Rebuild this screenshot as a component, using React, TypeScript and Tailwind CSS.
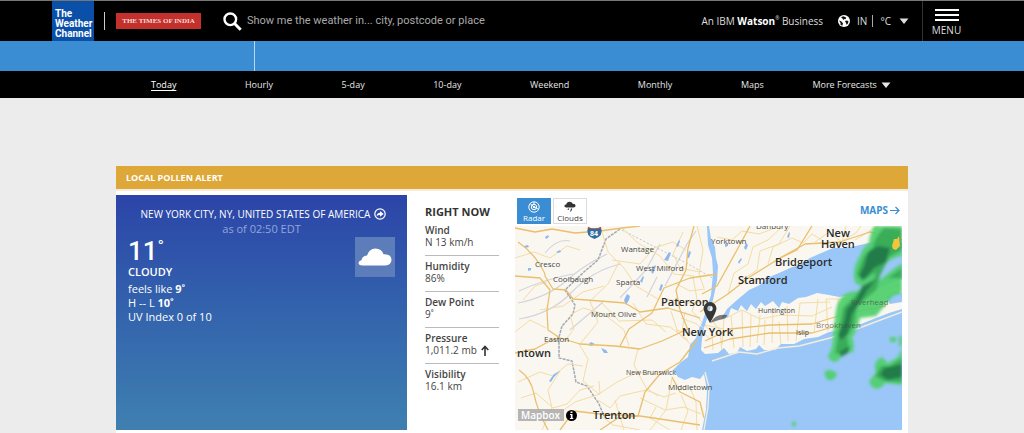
import type { ReactNode } from "react";

const forecastLinks = ["Hourly", "5-day", "10-day", "Weekend", "Monthly", "Maps"];

const conditions: { label: string; value: string; rising?: boolean }[] = [
  { label: "Wind", value: "N 13 km/h" },
  { label: "Humidity", value: "86%" },
  { label: "Dew Point", value: "9˚" },
  { label: "Pressure", value: "1,011.2 mb", rising: true },
  { label: "Visibility", value: "16.1 km" },
];

// [name, x, baseline, size, weight]
const places: [string, number, number, number, number][] = [
  ["Cresco", 535, 267, 8, 400],
  ["Coolbaugh", 553, 282, 8, 400],
  ["Wantage", 621, 252, 8, 400],
  ["West Milford", 636, 271, 8, 400],
  ["Sparta", 616, 285, 8, 400],
  ["Mount Olive", 591, 317, 8, 400],
  ["Easton", 544, 342, 8, 400],
  ["Yorktown", 711, 244, 8, 400],
  ["Danbury", 756, 229, 8, 400],
  ["Huntington", 758, 313, 7, 400],
  ["Islip", 796, 335, 7, 400],
  ["Brookhaven", 816, 328, 8, 400],
  ["Riverhead", 851, 305, 8, 400],
  ["New Brunswick", 626, 375, 7, 400],
  ["Middletown", 668, 390, 8, 400],
  ["New", 826, 237, 11, 600],
  ["Haven", 821, 248, 11, 600],
  ["Bridgeport", 775, 266, 11, 600],
  ["Stamford", 738, 284, 11, 600],
  ["Paterson", 661, 306, 11, 600],
  ["New York", 682, 336, 11, 600],
  ["ntown", 517, 357, 11, 600],
  ["Trenton", 593, 419, 11, 600],
];

const mainRoads = [
  "M515 228 L535 232 L552 229 L575 233 L600 231 L622 228 L640 226",
  "M518 242 Q530 250 538 262 T545 276 L553 289 L566 290 L573 299 L600 301 L625 303 L640 312 L668 308 L700 318",
  "M515 276 L540 278 L550 290 L547 310 L548 330 L560 338 L580 344 L615 346 L640 349 L662 341 L690 328",
  "M515 353 L535 349 L548 342 L560 338",
  "M519 370 Q531 378 534 394 T548 430",
  "M694 226 L688 248 L686 270 L676 290 L680 310 L688 330",
  "M700 312 L728 294 L748 278 L780 258 L805 244 L840 242 L870 232 L902 240",
  "M697 340 L680 362 L660 374 L645 392 L638 416 L618 418 L600 430",
  "M672 377 L680 392 L700 402 L704 418",
  "M705 341 L730 329 L770 325 L812 324 L845 314 L886 306",
  "M704 348 L730 339 L770 333 L812 333 L850 322",
  "M702 294 L717 286 L737 250 L750 226",
  "M780 258 L797 250 L812 226",
  "M620 346 L629 329 L652 313 L664 288 L690 278 L717 274",
  "M560 430 L574 411 L600 414 L640 416 L700 425",
];

const minorRoads = [
  "M515 258 L534 252 L550 258 L567 246 L580 250",
  "M523 300 L535 286 L547 282",
  "M515 332 L530 320 L546 328 M580 344 L598 322 L590 301 L608 284 L619 262",
  "M540 310 L563 306 L583 292 L604 286",
  "M602 232 L608 252 L624 268 L636 286 L658 299",
  "M612 260 L640 264 L654 248 L673 242 L686 250",
  "M622 228 L638 243 L660 256 L674 274 L694 276",
  "M633 303 L646 324 L670 327 L688 340",
  "M601 302 L619 321 L652 320 L666 332",
  "M579 344 L588 359 L583 381 L599 394 L617 382 L638 372 L658 374",
  "M599 381 L600 394 L575 402 L561 412",
  "M521 398 L536 393 L553 408 L567 404 L580 390 L594 386",
  "M518 382 L540 372 L553 376 L568 364 L583 366",
  "M638 349 L634 365 L646 388 L658 396",
  "M598 400 L610 408 L620 396 L646 390 L664 397 L676 393",
  "M600 415 L613 425 L640 430 M615 400 L624 430",
  "M640 398 L665 410 L684 407 L701 414",
  "M650 430 L666 410 L672 378 M681 395 L688 411 L681 430",
  "M656 407 L650 418 L670 430 M690 388 L696 402 L697 430",
  "M717 237 L732 240 L742 231 L759 234 L775 228",
  "M728 294 L734 273 L748 264 L753 247 L768 240 L783 226",
  "M741 281 L757 270 L760 251 L779 244 L790 226",
  "M768 264 L773 247 L792 238 L803 243 L812 234 L822 240",
  "M815 242 L829 232 L842 242 L846 226",
  "M835 245 L856 233 L861 226 M855 240 L878 226 M884 240 L894 226",
  "M722 345 L724 319 L742 310 L760 319 L781 315 L812 316 L832 307",
  "M743 347 L742 310 M757 343 L760 315 M772 343 L773 309 M788 341 L787 306",
  "M796 341 L800 303 L830 302 M814 333 L818 299 M828 331 L826 299 L850 299",
  "M841 325 L838 299 M856 319 L858 294 L882 289 M872 313 L870 296 L900 284",
  "M671 311 L678 333 L695 348 M693 277 L697 299 L692 311 L711 332",
  "M675 283 L690 291 L705 289 M667 299 L686 303 L710 302",
  "M681 318 L697 324 L710 340 M685 312 L682 332 M676 330 L699 335",
  "M706 310 L714 323 L723 335 M700 324 L724 329 M712 334 L713 350 M720 328 L722 353",
  "M731 316 L734 348 M751 315 L750 347 M765 320 L764 345 M779 322 L781 345",
  "M697 226 L703 250 L699 274 L704 288 M683 232 L673 254 L680 268 L700 272",
  "M542 430 L552 408 L548 390 L560 371",
  "M564 342 L574 329 L570 315 L583 308 L604 314 L624 330 L629 346",
];

const lakes = [
  "M624 300 l3 -6 l3 2 l-1 4 l-3 5z",
  "M664 260 l5 -8 l2 1 l-3 8z",
  "M588 345 l3 -3 l4 2 l-3 2z",
  "M601 348 l5 2 l2 3 l-4 0z",
  "M640 281 l3 -5 l1 1 l-2 6z",
  "M651 272 l4 -7 l1 1 l-3 8z",
  "M549 381 l5 -7 l6 -3 l-6 6 l-3 5z",
  "M676 246 l3 -6 l1 1 l-2 6z",
  "M659 290 l2 -6 l2 1 l-2 6z",
  "M687 258 l2 -7 l2 1 l-2 6z",
  "M524 246 l4 -1 l1 2 l-4 1z",
  "M545 237 l3 -2 l1 2 l-3 2z",
  "M556 252 l4 -2 l1 2 l-3 1z",
  "M528 268 l3 0 l0 2 l-3 1z",
  "M744 248 l2 -5 l2 2 l-2 5z",
  "M725 244 l3 -1 l0 3 l-3 1z",
  "M787 237 l2 -5 l1 1 l-1 5z",
  "M738 262 l3 -4 l1 1 l-3 5z",
];

const water = [
  // Long Island Sound
  "M721 319 L727 309 L737 300 L749 290 L760 285 L767 278 L779 273 L790 268 L801 264 L810 258 L819 254 L833 248 L846 248 L860 245 L873 242 L884 244 L902 242 L902 279 L887 284 L873 291 L855 295 L839 297 L829 295 L817 293 L806 297 L798 298 L789 304 L782 302 L779 308 L773 301 L765 306 L761 302 L756 309 L751 304 L747 311 L741 305 L738 311 L731 308 L728 317z",
  // Raritan Bay and the Atlantic
  "M673 370 L680 363 L688 357 L690 345 L696 338 L700 326 L704 328 L702 339 L701 350 L705 354 L718 353 L724 348 L729 354 L737 353 L740 347 L747 351 L756 349 L759 345 L764 350 L775 350 L781 344 L794 344 L804 339 L818 337 L829 332 L842 330 L861 324 L876 318 L889 313 L902 309 L902 430 L702 430 L706 410 L707 390 L704 374 L700 379 L692 377 L685 380 L678 377z",
  // Hudson
  "M709 226 L711 239 L715 247 L716 258 L718 266 L717 281 L713 300 L704 328 L701 326 L711 295 L713 273 L712 258 L708 245 L707 226z",
  "M886 297 L895 291 L902 293 L902 302 L890 304z",
];

const radar = {
  light: [
    "M902 226 L874 226 Q869 236 869 243 Q862 248 860 256 Q853 266 854 278 Q855 286 863 286 Q862 291 850 292 Q838 296 836 310 L833 334 Q834 346 828 356 Q831 364 838 361 Q842 353 853 352 Q855 344 852 338 Q858 328 860 318 L876 316 L893 296 L902 293 L902 263 Q890 271 880 280 Q876 280 880 270 Q890 257 902 256z",
    "M825 371 Q832 368 837 374 Q835 381 828 380 Q824 377 825 371z",
    "M869 382 Q872 376 876 373 Q872 361 882 357 L888 363 L898 357 L902 348 L902 385 L885 383 Q879 392 872 387z",
    "M890 337 h6 v5 h-6z",
    "M899 336 h3 v10 h-3z",
    "M792 422 h4 v4 h-4z",
  ],
  mid: [
    "M902 229 L884 228 Q874 238 873 247 L864 256 L857 274 L862 281 L876 272 L874 280 L858 293 L843 308 L839 330 L835 354 L849 350 L847 336 L854 326 L857 306 L876 290 L880 276 L889 257 L902 250z",
    "M875 376 L881 366 L890 366 L902 358 L902 382 L884 381z",
    "M888 278 L902 268 L902 278z",
  ],
  dark: [
    "M868 252 L878 246 L890 248 L886 262 L874 268 L864 280 L859 276 L864 266z",
    "M847 308 L856 300 L862 286 L876 279 L866 292 L860 303 L852 314 L848 334 L841 340 L838 335 L844 322z",
    "M880 375 L884 368 L902 364 L902 377 L888 380z",
    "M839 352 L850 346 L848 353 L841 357z",
  ],
};

function Caret() {
  return (
    <svg viewBox="0 0 10 6" className="h-[6px] w-2.5" fill="currentColor" aria-hidden="true">
      <path d="M0.5 0.5h9L5 6z" />
    </svg>
  );
}

function SearchIcon() {
  return (
    <svg viewBox="0 0 19 19" className="h-[19px] w-[19px] shrink-0" fill="none" stroke="#fff" aria-hidden="true">
      <circle cx="7.3" cy="7.3" r="5.8" strokeWidth="2.4" />
      <path d="M11.5 11.5L17.7 17.7" strokeWidth="3" />
    </svg>
  );
}

function GlobeIcon() {
  return (
    <svg viewBox="0 0 12 12" className="h-3 w-3" aria-hidden="true">
      <circle cx="6" cy="6" r="6" fill="#fff" />
      <path d="M5.3 1.2L8.2 2.4L7.6 4.3L6.3 4L5.4 5L4.4 3.4L3 2.2z" fill="#111" />
      <path d="M1 5.5L3.2 6.3L5 8.2L4.3 10.8L2.5 9.7L2.6 8z" fill="#111" />
      <path d="M7 6L9 5.5L10.6 6.6L9.6 8.9L8.5 9.8L8 8z" fill="#111" />
    </svg>
  );
}

function LayerButton({ active, label, children }: { active?: boolean; label: string; children: ReactNode }) {
  return (
    <button
      type="button"
      className={
        active
          ? "flex h-[26px] w-[34px] flex-col items-center justify-between border border-[#3a8dd2] bg-[#3a8dd2] pt-0.5 text-[8px] leading-[10px] text-white"
          : "flex h-[26px] w-[34px] flex-col items-center justify-between border border-[#dcdcdc] bg-white pt-0.5 text-[8px] leading-[10px] text-[#444]"
      }
    >
      {children}
      {label}
    </button>
  );
}

function RadarMap() {
  return (
    <svg
      viewBox="515 226 387 204"
      className="block w-full"
      role="img"
      aria-label="Radar map around New York"
      fontFamily="'Open Sans', sans-serif"
    >
      <defs>
        <filter id="soft" x="-10%" y="-10%" width="120%" height="120%">
          <feGaussianBlur stdDeviation="1.6" />
        </filter>
      </defs>
      <rect x="515" y="226" width="387" height="204" fill="#faf7f1" />
      <g fill="none" stroke="#d5d3dc" strokeWidth="1.2">
        <path d="M518 303 Q548 297 566 281 T607 254" />
        <path d="M519 319 Q551 314 572 292 T621 264" />
        <path d="M519 291 Q545 279 573 274 M570 330 L603 302 M620 298 L646 270 L660 244" />
        <path d="M545 253 Q557 238 570 241 M665 286 L687 244 L696 231 M647 297 L657 277" />
      </g>
      <path
        d="M620 229 L606 239 L598 260 L585 271 L565 290 L575 305 L573 314 L562 326 L559 337 L559 358 L572 361 L576 382 L587 386 L599 404 L604 416"
        fill="none"
        stroke="#a3a9b2"
        strokeWidth="1.5"
        strokeDasharray="3 1"
      />
      <path d="M622 230 L690 265 L716 280" fill="none" stroke="#c5c2bc" strokeDasharray="2 2" />
      <g fill="none" stroke="#f4dca4" strokeWidth="1">
        {minorRoads.map((d) => (
          <path key={d} d={d} />
        ))}
      </g>
      <g fill="#8fb8f0">
        {lakes.map((d) => (
          <path key={d} d={d} />
        ))}
      </g>
      <g fill="#9ac7f7">
        {water.map((d) => (
          <path key={d} d={d} />
        ))}
      </g>
      <path
        d="M712 361 L739 352 L757 354 L778 348 L799 346 L830 338 L862 327 L902 312"
        fill="none"
        stroke="#f3eddc"
        strokeWidth="1.4"
      />
      <path d="M705 372 L709 387 L708 407 L704 430" fill="none" stroke="#f3eddc" strokeWidth="1.4" />
      <g fill="none" stroke="#e9bf6e" strokeWidth="1.3" strokeLinejoin="round">
        {mainRoads.map((d) => (
          <path key={d} d={d} />
        ))}
      </g>

      <g filter="url(#soft)">
        <g fill="#4fcf6b" fillOpacity="0.92">
          {radar.light.map((d) => (
            <path key={d} d={d} />
          ))}
        </g>
        <g fill="#34a653" fillOpacity="0.85">
          {radar.mid.map((d) => (
            <path key={d} d={d} />
          ))}
        </g>
        <g fill="#1f7045" fillOpacity="0.8">
          {radar.dark.map((d) => (
            <path key={d} d={d} />
          ))}
        </g>
      </g>
      <path d="M892 246 L894 239 L897 239 L899 236 L900 246 L896 250 L893 249z" fill="#f2c63c" />

      {places.map(([name, x, y, size, weight]) => (
        <text
          key={name}
          x={x}
          y={y}
          fontSize={size}
          fontWeight={weight}
          fill={weight === 600 ? "#2b2b2b" : "#484848"}
          fillOpacity={name === "Riverhead" || name === "Brookhaven" ? 0.7 : 1}
        >
          {name}
        </text>
      ))}

      {/* interstate shield */}
      <path d="M588 227 Q594 230 601 227 Q604 236 594.500 239 Q585 236 588 227z" fill="#2f6f9f" />
      <path d="M588 227 Q594 230 601 227 L601 229 L588 229z" fill="#c0453f" />
      <text x="590" y="236" fontSize="7" fontWeight="700" fill="#fff">84</text>

      {/* pin */}
      <path d="M710 323 Q716 313 727 315 Q727 319 719 320z" fill="#3a3a3a" fillOpacity="0.65" />
      <path
        d="M710 323 Q704 313 703.500 308.500 A6.500 6.500 0 1 1 716.500 308.500 Q716 313 710 323z M710 305.800 A2.700 2.700 0 1 0 710 311.200 A2.700 2.700 0 1 0 710 305.800z"
        fill="#363636"
        fillRule="evenodd"
      />

      <rect x="518" y="409" width="46" height="12" fill="#a9a9a9" fillOpacity="0.85" />
      <text x="521" y="419" fontSize="10" fontWeight="600" fill="#fff">Mapbox</text>
      <circle cx="571.500" cy="415.500" r="5.500" fill="#000" />
      <path d="M570.500 411.500h2v1.500h-2z M570 414h2.500v4h0.800v1h-3.400v-1h0.900v-3h-0.800z" fill="#fff" />
    </svg>
  );
}

function Header() {
  return (
    <header className="flex h-[41px] items-stretch border-t border-[#777] bg-black pl-[52px] text-[#ddd]">
      <a
        href="#"
        className="flex w-[42px] shrink-0 flex-col justify-end bg-[#0a4fa8] pb-0.5 pl-[3px] font-['Roboto',sans-serif] text-[10px] leading-[10px] font-bold text-white"
      >
        <span>The</span>
        <span>Weather</span>
        <span>Channel</span>
      </a>
      <div className="ml-2.5 h-[18px] w-px self-center bg-[#ccc]" />
      <a
        href="#"
        className="ml-[11px] flex h-4 w-[85px] shrink-0 items-center justify-center self-center bg-[#c4302b] font-['Liberation_Serif',serif] text-[7px] font-bold whitespace-nowrap text-[#f6dcd8]"
      >
        THE TIMES OF INDIA
      </a>
      <label className="ml-[22px] flex flex-1 items-center gap-[5px]">
        <SearchIcon />
        <input
          type="text"
          aria-label="Search location"
          placeholder="Show me the weather in... city, postcode or place"
          className="w-full min-w-0 bg-transparent font-['Roboto','Liberation_Sans',sans-serif] text-[11px] text-white outline-none placeholder:text-[#aaa]"
        />
      </label>
      <p className="flex items-center text-[10px] whitespace-pre">
        An IBM <b className="text-white">Watson</b>
        <span className="self-center pb-1 text-[5px]">®</span> Business
      </p>
      <button type="button" className="ml-[15px] flex items-center text-[10px]">
        <GlobeIcon />
        <span className="ml-[7px]">IN</span>
        <span className="ml-[5px] h-3 w-px bg-[#aaa]" />
        <span className="mr-2 ml-[7px]">°C</span>
        <Caret />
      </button>
      <button
        type="button"
        className="ml-[13px] flex w-[102px] flex-col items-start border-l border-[#333] pt-2 pl-2.5 text-[10px] leading-3"
      >
        <span className="flex w-[27px] flex-col items-center gap-[3px]">
          <span className="h-0.5 w-6 bg-white" />
          <span className="h-0.5 w-6 bg-white" />
          <span className="h-0.5 w-6 bg-white" />
          <span>MENU</span>
        </span>
      </button>
    </header>
  );
}

function CurrentConditions() {
  return (
    <section className="w-[291px] shrink-0 bg-linear-to-b from-[#2c44a8] to-[#3f80b0] px-3 pt-3 text-[11px] leading-[14px] text-white">
      <h1 className="flex items-center justify-center gap-1 pl-1 text-[10px] whitespace-nowrap">
        NEW YORK CITY, NY, UNITED STATES OF AMERICA
        <svg viewBox="0 0 12 12" className="h-3 w-3" aria-hidden="true">
          <circle cx="6" cy="6" r="5.2" fill="none" stroke="#fff" strokeWidth="1.2" />
          <path d="M2.6 8.500Q2.800 4.900 6 4.800V3L9.700 6L6 8.800V7.100Q3.800 7 2.600 8.500z" fill="#fff" />
        </svg>
      </h1>
      <p className="mt-px mb-px text-center text-[#93a6dd]">as of 02:50 EDT</p>
      <div className="flex items-start justify-between">
        <div>
          <p className="font-['Roboto',sans-serif] text-[26px] leading-7 font-medium">
            11<span className="align-top text-[20px] leading-6">˚</span>
          </p>
          <p className="font-semibold">CLOUDY</p>
          <p className="mt-[3px]">
            feels like <b>9˚</b>
          </p>
          <p>
            H -- L <b>10˚</b>
          </p>
          <p>UV Index 0 of 10</p>
        </div>
        <div className="flex h-10 w-10 items-center justify-center bg-[#5d7cba]">
          <svg viewBox="0 0 34 18" className="w-[34px]" fill="#fff" aria-label="Cloudy">
            <path d="M4.500 17.500 Q0.500 17.500 0.500 14.800 Q1 12.500 3.500 12.300 Q3.800 7.800 9 7.400 Q11 1 17.300 0.600 Q23.800 0.800 25.500 6.300 Q33.500 5.800 33.500 12 Q33 17.300 27.500 17.500z" />
          </svg>
        </div>
      </div>
    </section>
  );
}

function RightNow() {
  return (
    <section className="ml-[18px] w-[74px] shrink-0 pt-[9px] text-[10px] leading-3 text-[#444]">
      <h2 className="text-[11px] leading-4 font-bold whitespace-nowrap text-[#333]">RIGHT NOW</h2>
      <dl className="divide-y divide-[#bbb]">
        {conditions.map(({ label, value, rising }) => (
          <div key={label} className="h-9 pt-1">
            <dt className="font-semibold">{label}</dt>
            <dd className="flex items-center whitespace-nowrap">
              {value}
              {rising && (
                <svg viewBox="0 0 8 11" className="ml-1 h-[11px] w-2" fill="none" stroke="#333" strokeWidth="1.6" aria-label="rising">
                  <path d="M4 11V1.500M0.700 5L4 1.500L7.300 5" />
                </svg>
              )}
            </dd>
          </div>
        ))}
      </dl>
    </section>
  );
}

export default function App() {
  return (
    <div className="min-h-screen bg-[#ececec] font-['Open_Sans','Noto_Sans',sans-serif]">
      <Header />
      <div className="flex h-[30px] bg-[#3a8dd2] pl-[254px]">
        <div className="w-px bg-[#b9d8f1]" />
      </div>
      <nav className="bg-black text-[9px] text-[#e6e6e6]">
        <ul className="mx-auto flex h-[27px] max-w-[792px] items-center justify-between pr-[17px] pl-[35px]">
          <li>
            <a href="#" className="text-white underline underline-offset-2">
              Today
            </a>
          </li>
          {forecastLinks.map((name) => (
            <li key={name}>
              <a href="#">{name}</a>
            </li>
          ))}
          <li className="-ml-5">
            <button type="button" className="flex items-center gap-1">
              More Forecasts
              <Caret />
            </button>
          </li>
        </ul>
      </nav>

      <main className="mx-auto mt-[68px] max-w-[792px] bg-white">
        <a href="#" className="flex h-[23px] items-center bg-[#dea839] pl-2.5 text-[9px] font-bold text-white">
          LOCAL POLLEN ALERT
        </a>
        <div className="flex border-t-2 border-[#f8eadd] pt-1 pb-[3px]">
          <CurrentConditions />
          <RightNow />
          <section className="mr-[6px] ml-4 flex-1">
            <div className="flex h-[31px] items-center gap-0.5 pl-0.5">
              <LayerButton active label="Radar">
                <svg viewBox="0 0 12 12" className="h-3 w-3" fill="none" stroke="#fff" aria-hidden="true">
                  <circle cx="6" cy="6" r="5.200" />
                  <circle cx="6" cy="6" r="2.700" />
                  <path d="M6 6L2 2.500M6 6L10 8M6 1v3" />
                  <circle cx="6" cy="6" r="0.800" fill="#fff" />
                </svg>
              </LayerButton>
              <LayerButton label="Clouds">
                <svg viewBox="0 0 12 11" className="h-[11px] w-3" fill="#333" aria-hidden="true">
                  <path d="M2.300 6.500Q0.300 6.500 0.400 4.800Q0.700 3.400 2.300 3.500Q2.800 0.800 5.500 0.800Q8 0.800 8.700 2.800Q11.600 2.700 11.600 4.700Q11.500 6.500 9.600 6.500z" />
                  <path d="M4 7.500l1.300 0l-0.800 1.500h-1zM7 7.500l1.300 0l-1.200 3h-1z" />
                </svg>
              </LayerButton>
              <a href="#" className="ml-auto flex items-center gap-0.5 pr-0.5 text-[10px] font-bold text-[#3a8dd2]">
                MAPS
                <svg viewBox="0 0 10 9" className="h-[9px] w-2.5" fill="none" stroke="currentColor" strokeWidth="1.200" aria-hidden="true">
                  <path d="M0 4.500H9M5.500 1L9 4.500L5.500 8" />
                </svg>
              </a>
            </div>
            <RadarMap />
          </section>
        </div>
      </main>
    </div>
  );
}
